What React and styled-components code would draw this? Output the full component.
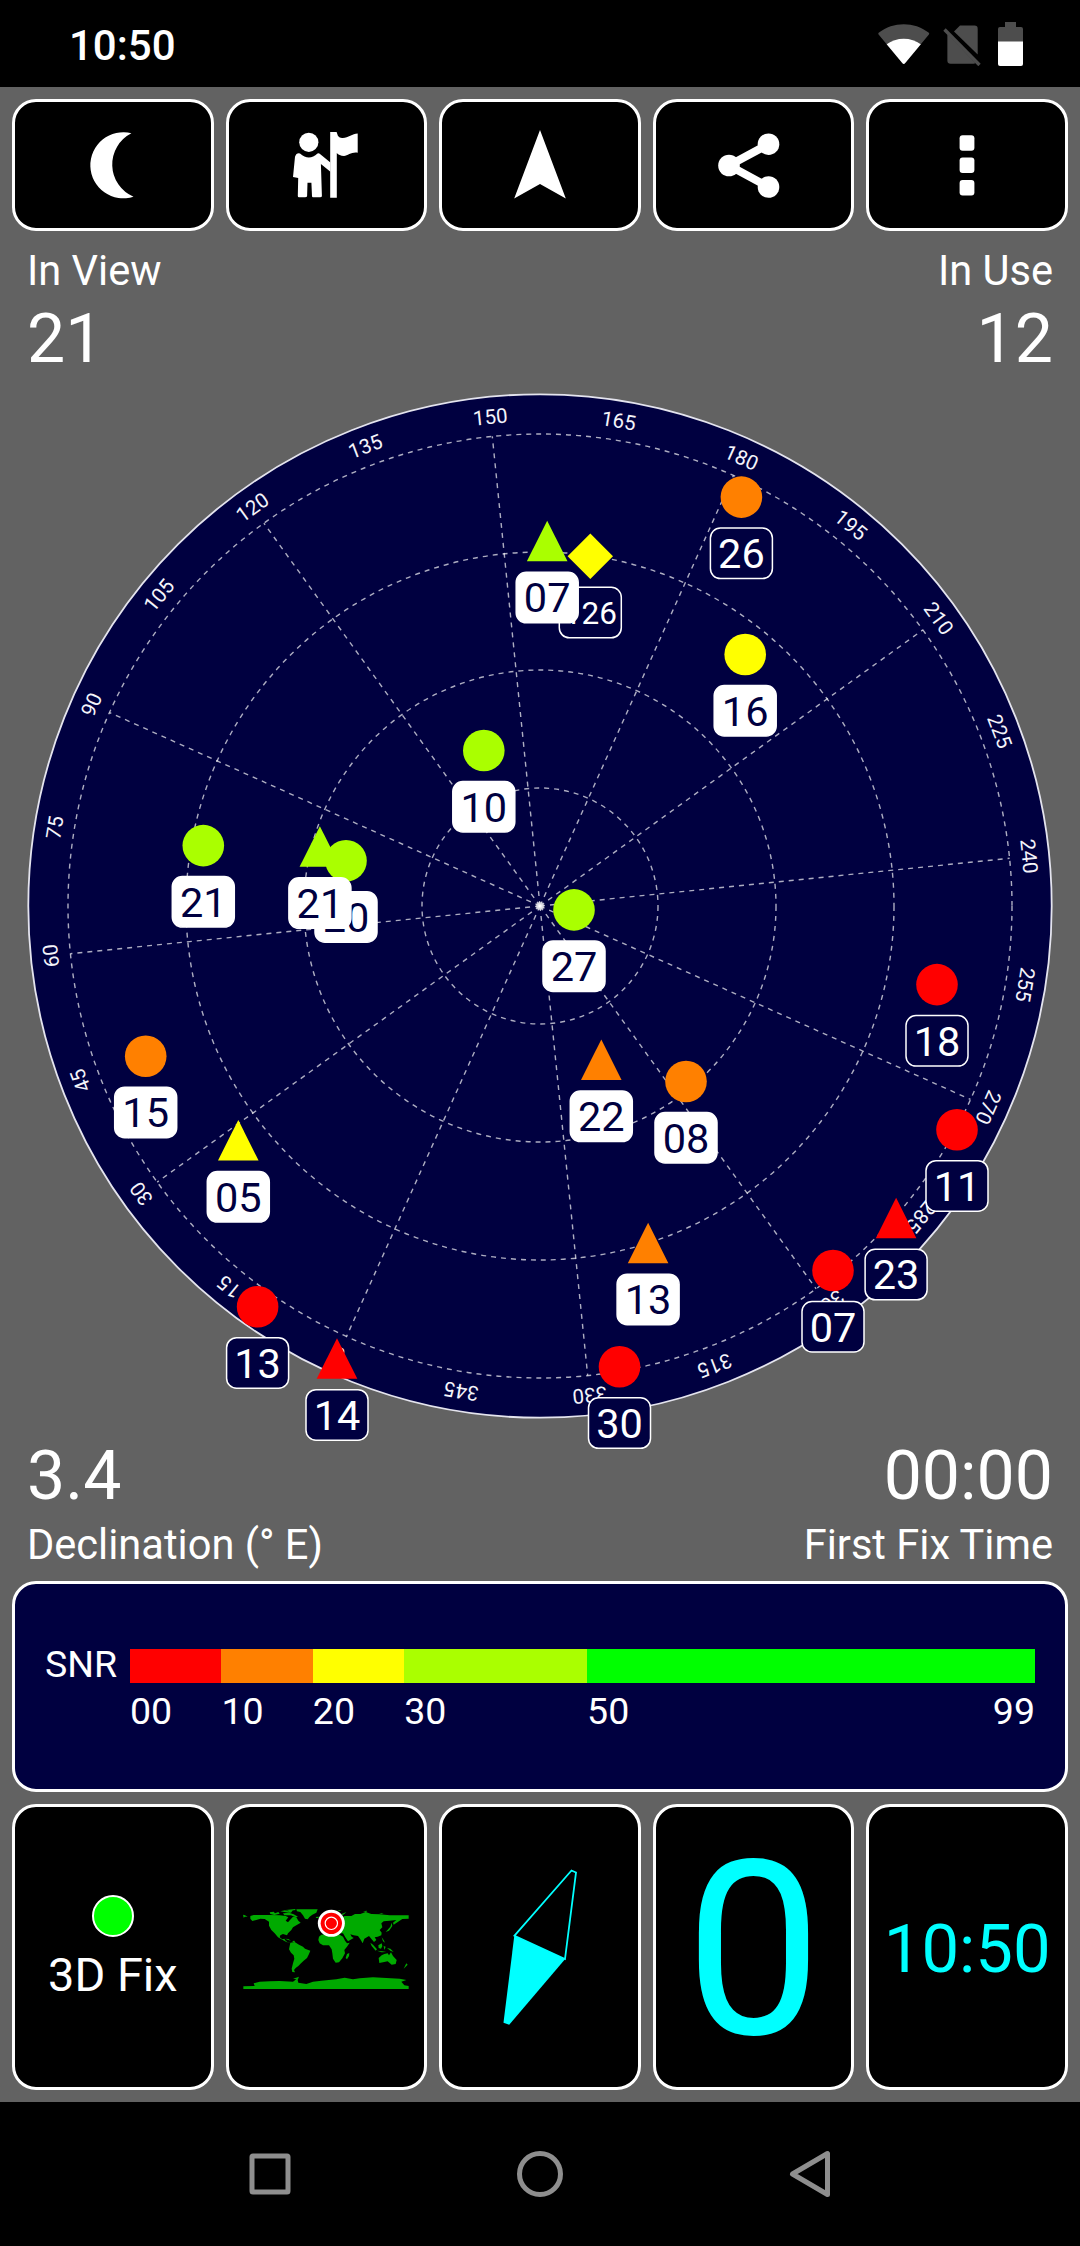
import React from 'react';

import styled, { createGlobalStyle, ThemeProvider } from 'styled-components';


const theme = {
  black: '#000000',
  backdrop: '#626262',
  panel: '#000040',
  border: '#ffffff',
  accent: '#00ffff',
  muted: '#4d4d4d',
  navIcon: '#8e8e8e',
  land: '#00aa00',
  font: 'Roboto, "Liberation Sans", sans-serif'
};

const signal = {
  red: '#ff0000',
  orange: '#ff8000',
  yellow: '#ffff00',
  lime: '#aaff00',
  green: '#00ff00'
};

const GlobalStyle = createGlobalStyle`
  * {
    box-sizing: border-box;
  }

  body {
    margin: 0;
    background-color: #000000;
  }
`;

const Screen = styled.div`
  width: 1080px;
  height: 2246px;
  display: flex;
  flex-direction: column;
  overflow: hidden;
  background-color: ${props => props.theme.backdrop};
  color: #ffffff;
  font-family: ${props => props.theme.font};
`;

const StatusBar = styled.header`
  height: 87px;
  flex-shrink: 0;
  padding: 0 57px 0 69px;
  display: flex;
  align-items: center;
  justify-content: space-between;
  background-color: ${props => props.theme.black};
`;

const StatusTime = styled.span`
  margin-top: 5px;
  font-size: 42px;
  font-weight: 500;
  line-height: 50px;
`;

const StatusIcons = styled.div`
  display: flex;
  align-items: center;
`;

const StatusIcon = styled.svg`
  height: 44px;
  margin-left: ${props => props.$gap || 0}px;
`;

const ButtonRow = styled.div`
  flex-shrink: 0;
  padding: 12px 12px 0;
  display: grid;
  grid-template-columns: repeat(5, 1fr);
  gap: 12px;
`;

const Tile = styled.button`
  height: ${props => props.$height}px;
  min-width: 0;
  padding: ${props => props.$shift || 0}px 0 0;
  display: flex;
  flex-direction: column;
  align-items: center;
  justify-content: center;
  border: 3px solid ${props => props.theme.border};
  border-radius: 24px;
  background-color: ${props => props.theme.black};
  color: ${props => props.$color || '#ffffff'};
  font-family: inherit;
`;

const Readouts = styled.div`
  height: 162px;
  flex-shrink: 0;
  padding: ${props => props.$top}px 27px 0;
  display: flex;
  justify-content: space-between;
`;

const Readout = styled.div`
  display: flex;
  flex-direction: column;
  text-align: ${props => props.$align || 'left'};
`;

const ReadoutLabel = styled.span`
  font-size: 41.6px;
  line-height: 54px;
`;

const ReadoutValue = styled.span`
  font-size: 68px;
  line-height: 83px;
`;

const SkyChart = styled.svg`
  width: 1080px;
  height: 1026px;
  flex-shrink: 0;
  display: block;
  overflow: visible;
  font-family: ${props => props.theme.font};
`;

const SnrPanel = styled.section`
  height: 211px;
  flex-shrink: 0;
  margin: 0 12px;
  padding: 65px 30px 0 30px;
  display: flex;
  border: 3px solid ${props => props.theme.border};
  border-radius: 24px;
  background-color: ${props => props.theme.panel};
`;

const SnrTitle = styled.span`
  width: 85px;
  font-size: 37.5px;
  line-height: 31px;
`;

const SnrScale = styled.div`
  flex: 1;
  display: flex;
  flex-direction: column;
`;

const SnrBar = styled.div`
  display: flex;
`;

const SnrSegment = styled.div`
  height: 34px;
  flex: ${props => props.$span} 1 0;
  background-color: ${props => props.$color};
`;

const SnrTicks = styled.div`
  display: flex;
  margin-top: 5px;
  font-size: 37.5px;
  line-height: 46px;
`;

const SnrTick = styled.span`
  flex: ${props => props.$span} 1 0;
  display: flex;
  justify-content: space-between;
`;

const FixDot = styled.span`
  width: 42px;
  height: 42px;
  border: 2px solid #ffffff;
  border-radius: 50%;
  background-color: ${signal.green};
`;

const FixText = styled.span`
  margin-top: 10px;
  font-size: 47px;
  line-height: 56px;
`;

const Speed = styled.span`
  font-size: 243px;
  line-height: 280px;
`;

const Clock = styled.span`
  font-size: 67px;
  line-height: 80px;
`;

const NavBar = styled.nav`
  height: 144px;
  flex-shrink: 0;
  margin-top: 12px;
  padding: 0 135px;
  display: grid;
  grid-template-columns: repeat(3, 1fr);
  align-items: center;
  justify-items: center;
  background-color: ${props => props.theme.black};
`;

const NavIcon = styled.svg`
  width: 56px;
  height: 56px;
  fill: none;
  stroke: ${props => props.theme.navIcon};
  stroke-width: 5;
  stroke-linejoin: round;
`;


const headings = Array.from({ length: 24 }, (_, i) => i * 15);
const rotation = -155.8;

// x and y are offsets from the zenith
const satellites = [
  { id: '20', shape: 'circle', color: 'lime', x: -194, y: -45.3, used: true },
  { id: '126', shape: 'diamond', color: 'yellow', x: 50.3, y: -349.7 },
  { id: '10', shape: 'circle', color: 'lime', x: -56.2, y: -155.5, used: true },
  { id: '21', shape: 'circle', color: 'lime', x: -336.7, y: -60.4, used: true },
  { id: '21', shape: 'triangle', color: 'lime', x: -220.1, y: -59.2, used: true },
  { id: '07', shape: 'triangle', color: 'lime', x: 7.2, y: -364.7, used: true },
  { id: '26', shape: 'circle', color: 'orange', x: 201.4, y: -408.9 },
  { id: '16', shape: 'circle', color: 'yellow', x: 205.2, y: -251.5, used: true },
  { id: '15', shape: 'circle', color: 'orange', x: -394.3, y: 150.2, used: true },
  { id: '05', shape: 'triangle', color: 'yellow', x: -301.7, y: 234.6, used: true },
  { id: '27', shape: 'circle', color: 'lime', x: 34, y: 3.9, used: true },
  { id: '22', shape: 'triangle', color: 'orange', x: 61.3, y: 154.1, used: true },
  { id: '08', shape: 'circle', color: 'orange', x: 146, y: 175.5, used: true },
  { id: '13', shape: 'triangle', color: 'orange', x: 108.1, y: 337.2, used: true },
  { id: '18', shape: 'circle', color: 'red', x: 397, y: 78.6 },
  { id: '11', shape: 'circle', color: 'red', x: 417, y: 223.7 },
  { id: '23', shape: 'triangle', color: 'red', x: 356.1, y: 312.3 },
  { id: '07', shape: 'circle', color: 'red', x: 293, y: 364.5 },
  { id: '30', shape: 'circle', color: 'red', x: 79.5, y: 460.8 },
  { id: '13', shape: 'circle', color: 'red', x: -282.4, y: 400.7 },
  { id: '14', shape: 'triangle', color: 'red', x: -203, y: 452.7 }
];

const snrBands = [
  { color: signal.red, from: '00', span: 10 },
  { color: signal.orange, from: '10', span: 10 },
  { color: signal.yellow, from: '20', span: 10 },
  { color: signal.lime, from: '30', span: 20 },
  { color: signal.green, from: '50', to: '99', span: 49 }
];

const land = [
  // Americas
  'M62 78L72 75L120 75L150 76L168 78L176 82L168 92L175 97L183 88L190 80L200 82L206 92L213 98L200 106L190 112L185 120L175 130L172 136L160 132L152 136L150 142L158 148L164 146L168 152L176 158L184 160L170 156L155 148L145 142L135 130L125 120L118 107L118 95L105 87L92 86L80 90L68 93L62 86Z',
  'M182 158L195 156L208 164L220 170L226 176L242 182L238 192L232 204L222 212L214 220L206 228L198 234L193 240L196 247L188 246L186 236L190 220L194 206L192 196L184 188L178 178L180 168Z',
  'M166 146L176 147L184 152L176 150ZM188 153L194 152L196 156L190 156Z',
  'M40 74L46 76L54 80L46 80L42 83Z',
  // Greenland and the arctic islands
  'M200 58L264 58L260 68L248 74L240 80L234 88L226 86L220 76L212 66L202 64Z',
  'M120 67L132 65L136 70L146 66L150 71L134 75L122 72ZM152 64L166 61L176 64L190 60L184 68L168 67ZM160 70L178 68L192 73L205 80L198 82L184 76L164 76ZM168 60L196 57L198 60L178 63Z',
  'M258 81L268 80L266 84L260 84Z',
  // Africa
  'M268 140L275 134L300 132L330 134L340 140L346 152L352 160L360 158L352 170L344 180L346 190L338 205L328 217L318 218L310 206L308 190L306 178L298 166L280 166L270 160L266 150Z',
  'M352 192L359 189L358 198L352 208L348 204Z',
  // Eurasia
  'M275 120L280 108L300 100L330 86L345 78L365 78L376 72L392 72L408 66L425 72L450 73L480 76L537 76L537 86L518 87L510 92L492 104L490 98L500 90L480 92L462 94L455 100L458 112L450 120L456 128L455 136L444 140L435 142L440 150L433 156L426 148L418 138L404 146L399 160L392 148L385 138L372 136L362 133L366 140L372 144L355 154L347 142L340 130L325 130L300 128Z',
  'M336 72L350 66L344 72L338 76ZM400 64L412 62L410 66ZM322 60L336 60L330 63ZM448 70L462 70L456 72Z',
  'M486 98L488 108L484 114L478 122L468 126L476 117L482 110Z',
  // Oceania
  'M422 158L430 164L442 178L438 182L426 168ZM446 166L456 160L458 168L454 176L447 174ZM456 142L462 150L466 158L460 154ZM442 182L458 184L470 186L456 187ZM462 168L468 170L464 180ZM472 174L482 176L492 186L482 182Z',
  'M447 204L456 196L464 192L474 190L478 196L484 187L490 198L501 210L498 222L486 224L474 214L460 217L449 219Z',
  'M530 220L534 224L528 230L522 236L526 228Z',
  // Antarctica
  'M41 289L75 288L72 280L90 275L120 274L150 273L190 275L200 268L190 266L208 260L204 270L206 278L230 282L250 275L275 272L320 268L345 263L370 268L390 265L430 262L470 264L510 266L530 270L515 275L524 286L537 288V297H41Z'
];


const ActionIcon = ({ children }) => (
  <svg width="100" height="100" viewBox="-50 -50 100 100" fill="currentColor">
    {children}
  </svg>
);

const Marker = ({ shape, color }) => {
  if (shape === 'triangle') {
    return <path d="M0 -20.5L20.3 20H-20.3Z" fill={color} />;
  }
  if (shape === 'diamond') {
    return <path d="M0 -22.7L22.7 0L0 22.7L-22.7 0Z" fill={color} />;
  }
  return <circle r="20.8" fill={color} />;
};

const Satellite = ({ id, shape, color, x, y, used }) => (
  <g transform={`translate(${x} ${y})`}>
    <Marker shape={shape} color={signal[color]} />
    <rect
      x="-31"
      y="31"
      width="62"
      height="50.5"
      rx="10"
      fill={used ? '#ffffff' : theme.panel}
      stroke="#ffffff"
      strokeWidth="1.5"
    />
    <text
      y={id.length > 2 ? 67.5 : 71}
      fontSize={id.length > 2 ? 31.5 : 41.5}
      textAnchor="middle"
      fill={used ? theme.panel : '#ffffff'}
    >
      {id}
    </text>
  </g>
);

const SkyPlot = () => (
  <SkyChart viewBox="-540 -513 1080 1026">
    <circle r="511.7" fill={theme.panel} stroke="#e4e4ee" strokeWidth="1.8" />
    <g fill="none" stroke="#ffffff" strokeOpacity="0.68" strokeWidth="1.4" strokeDasharray="5 5">
      {[118, 236, 354, 472].map(r => <circle key={r} r={r} />)}
      {headings.filter(deg => deg % 30 === 0).map(deg => (
        <line key={deg} y2="-472" transform={`rotate(${deg + rotation})`} />
      ))}
    </g>
    <circle r="4" fill="#ffffff" fillOpacity="0.6" />
    <g fill="#f4f4fa" fontSize="20.5" textAnchor="middle">
      {headings.map(deg => (
        <text key={deg} y="-484.5" transform={`rotate(${deg + rotation})`}>{deg}</text>
      ))}
    </g>
    {satellites.map(sat => <Satellite key={sat.shape + sat.id} {...sat} />)}
  </SkyChart>
);

const WorldMap = () => (
  <svg width="166" height="82" viewBox="40 54 498 246">
    {land.map(d => <path key={d} d={d} fill={theme.land} />)}
    <circle cx="305" cy="100" r="40.5" fill="#ffffff" />
    <circle cx="305" cy="100" r="32" fill={signal.red} />
    <circle cx="305" cy="100" r="18.5" fill="none" stroke="#ffffff" strokeWidth="3.5" />
  </svg>
);

const Compass = () => (
  <svg width="90" height="170" viewBox="-45 -85 90 170">
    <path
      d="M-25.5 -11.3L31.5 -76.5L36 -74.5L25 12Z"
      fill="none"
      stroke={theme.accent}
      strokeWidth="1.8"
    />
    <path d="M-25.7 -11.3L25.2 12L-30.8 77.7L-36.5 75.7Z" fill={theme.accent} />
  </svg>
);

export default class App extends React.Component {
  render() {
    return (
      <ThemeProvider theme={theme}>
        <GlobalStyle />
        <Screen>
          <StatusBar>
            <StatusTime>10:50</StatusTime>
            <StatusIcons>
              <StatusIcon width="52" viewBox="0 0 52 44">
                <path d="M.8 12.8Q-.3 11.6 1 10.6C15 -.6 36.5 -.6 50.5 10.6Q51.8 11.6 50.7 12.8L27 41.2Q25.7 42.6 24.5 41.2Z" fill={theme.muted} />
                <path d="M8.7 22.3C18 14.8 33.5 14.8 42.8 22.3L27 41.2Q25.7 42.6 24.5 41.2Z" fill="#ffffff" />
              </StatusIcon>
              <StatusIcon $gap={13} width="38" viewBox="0 0 38 44">
                <path d="M11 9.5L17 3.5H31.5Q34.7 3.5 34.7 6.7V32.5Z" fill={theme.muted} />
                <path d="M4.4 12L32.5 41Q32 41.7 30.5 41.7H7.5Q4.4 41.7 4.4 38.5Z" fill={theme.muted} />
                <path d="M1.5 7.5L36.5 43" stroke={theme.muted} strokeWidth="3.4" />
              </StatusIcon>
              <StatusIcon $gap={17} width="25" viewBox="0 0 25 44">
                <path d="M7 0H18V5H23Q25 5 25 7V20H0V7Q0 5 2 5H7Z" fill={theme.muted} />
                <path d="M0 19.5H25V42Q25 44 23 44H2Q0 44 0 42Z" fill="#ffffff" />
              </StatusIcon>
            </StatusIcons>
          </StatusBar>

          <ButtonRow>
            <Tile $height={132}>
              <ActionIcon>
                <path d="M18.4 -31.7A33 33 0 1 0 20.5 31.7A35 35 0 0 1 18.4 -31.7Z" />
              </ActionIcon>
            </Tile>
            <Tile $height={132}>
              <ActionIcon>
                <circle cx="-17.2" cy="-22.7" r="9.6" />
                <path d="M-31 -8.3Q-29.5 -12.5 -26 -11.5Q-17 -3.5 -8.5 -11.5Q-7 -12.3 -6 -11L4.4 -2.5V6.7L-5.1 -1L-4.1 31Q-4 32.3 -6 32.3H-13Q-14 32.3 -14 31L-14.6 17.7H-18.5L-18.9 31Q-19 32.3 -21 32.3H-27Q-28.2 32.3 -28.2 31L-27.8 13L-33 12Z" />
                <path d="M4.2 -33H10.6L12 -29Q13.5 -27 16 -27C22 -26.5 26 -31.5 31.7 -31.5V-12.3C26 -13.5 22 -9.5 18 -9Q13 -9.5 10.8 -12V32.7H4.2Z" />
              </ActionIcon>
            </Tile>
            <Tile $height={132}>
              <ActionIcon>
                <path d="M0 -35L25.8 33.5L0 19L-25.8 33.5Z" />
              </ActionIcon>
            </Tile>
            <Tile $height={132}>
              <ActionIcon>
                <circle cx="-25" cy="0.5" r="10.8" />
                <circle cx="14.5" cy="-20.8" r="10.8" />
                <circle cx="14.5" cy="22" r="10.8" />
                <path d="M14.5 -20.8L-25 0.5L14.5 22" fill="none" stroke="currentColor" strokeWidth="8" />
              </ActionIcon>
            </Tile>
            <Tile $height={132}>
              <ActionIcon>
                <rect x="-7.4" y="-29.7" width="14.8" height="15.4" rx="3" />
                <rect x="-7.4" y="-7.4" width="14.8" height="15.4" rx="3" />
                <rect x="-7.4" y="15" width="14.8" height="15.4" rx="3" />
              </ActionIcon>
            </Tile>
          </ButtonRow>

          <Readouts $top={13}>
            <Readout>
              <ReadoutLabel>In View</ReadoutLabel>
              <ReadoutValue>21</ReadoutValue>
            </Readout>
            <Readout $align="right">
              <ReadoutLabel>In Use</ReadoutLabel>
              <ReadoutValue>12</ReadoutValue>
            </Readout>
          </Readouts>

          <SkyPlot />

          <Readouts $top={16}>
            <Readout>
              <ReadoutValue>3.4</ReadoutValue>
              <ReadoutLabel>Declination (° E)</ReadoutLabel>
            </Readout>
            <Readout $align="right">
              <ReadoutValue>00:00</ReadoutValue>
              <ReadoutLabel>First Fix Time</ReadoutLabel>
            </Readout>
          </Readouts>

          <SnrPanel>
            <SnrTitle>SNR</SnrTitle>
            <SnrScale>
              <SnrBar>
                {snrBands.map(band => (
                  <SnrSegment key={band.from} $span={band.span} $color={band.color} />
                ))}
              </SnrBar>
              <SnrTicks>
                {snrBands.map(band => (
                  <SnrTick key={band.from} $span={band.span}>
                    <span>{band.from}</span>
                    {band.to && <span>{band.to}</span>}
                  </SnrTick>
                ))}
              </SnrTicks>
            </SnrScale>
          </SnrPanel>

          <ButtonRow>
            <Tile $height={286} $shift={4}>
              <FixDot />
              <FixText>3D Fix</FixText>
            </Tile>
            <Tile $height={286} $shift={4}>
              <WorldMap />
            </Tile>
            <Tile $height={286}>
              <Compass />
            </Tile>
            <Tile $height={286} $color={theme.accent} $shift={7}>
              <Speed>0</Speed>
            </Tile>
            <Tile $height={286} $color={theme.accent} $shift={4}>
              <Clock>10:50</Clock>
            </Tile>
          </ButtonRow>

          <NavBar>
            <NavIcon viewBox="-28 -28 56 56">
              <rect x="-18" y="-18" width="36" height="36" rx="1" />
            </NavIcon>
            <NavIcon viewBox="-28 -28 56 56">
              <circle r="20.5" />
            </NavIcon>
            <NavIcon viewBox="-28 -28 56 56">
              <path d="M17.5 -20.5V20.5L-17.5 0Z" />
            </NavIcon>
          </NavBar>
        </Screen>
      </ThemeProvider>
    );
  }
}
